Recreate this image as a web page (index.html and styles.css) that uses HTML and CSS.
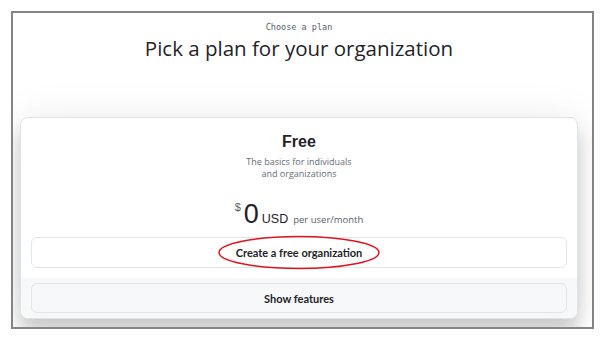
FILE: index.html
```html
<!DOCTYPE html>
<html lang="en">
<head>
    <meta charset="UTF-8">
    <meta name="viewport" content="width=device-width, initial-scale=1.0">
    <title>Pick a plan for your organization</title>
    <link rel="stylesheet" href="styles.css">
</head>
<body>
    <div class="frame">
        <div class="header">
            <p class="eyebrow">Choose a plan</p>
            <h1>Pick a plan for your organization</h1>
        </div>
        <div class="plan">
            <div class="plan-main">
                <h2>Free</h2>
                <p class="plan-desc">The basics for individuals<br>and organizations</p>
                <div class="price">
                    <span class="currency">$</span>
                    <span class="amount">0</span>
                    <span class="code">USD</span>
                    <span class="period">per user/month</span>
                </div>
                <div class="cta-wrap">
                    <button type="button" class="btn">Create a free organization</button>
                    <!-- red annotation ring drawn over the button -->
                    <svg class="ring" width="164" height="36" viewBox="0 0 164 36">
                        <ellipse cx="82" cy="17.5" rx="80" ry="16" fill="none" stroke="#e0141e" stroke-width="1.5"/>
                    </svg>
                </div>
            </div>
            <div class="plan-footer">
                <button type="button" class="btn btn-muted">Show features</button>
            </div>
        </div>
    </div>
</body>
</html>
```

FILE: styles.css
```css
body {
    margin: 0;
    background: #ffffff;
    font-family: 'Open Sans', 'Noto Sans', sans-serif;
    color: #1f2328;
}
.frame {
    box-sizing: border-box;
    width: 583px;
    height: 318px;
    margin: 11px 0 0 11px;
    border: 2px solid #858585;
    background: #ffffff;
    overflow: hidden;
    padding: 0 14px 0 7px;
}
.header {
    text-align: center;
    height: 104px;
}
.eyebrow {
    margin: 0;
    padding-top: 8px;
    font-family: 'DejaVu Sans Mono', monospace;
    font-size: 8.5px;
    line-height: 12px;
    color: #57606a;
}
h1 {
    margin: 1px 0 0;
    font-size: 20.5px;
    font-weight: 400;
    line-height: 28px;
    color: #1f2328;
}
.plan {
    background: #ffffff;
    border: 1px solid #dfe4ea;
    border-radius: 8px;
    overflow: hidden;
    box-shadow: 0 0 40px rgba(0, 0, 0, 0.08), 0 14px 18px rgba(0, 0, 0, 0.18);
}
.plan-main {
    text-align: center;
    padding: 14px 10px 10px 10px;
}
h2 {
    margin: 0;
    font-family: 'Liberation Sans', Arial, sans-serif;
    font-size: 16px;
    font-weight: 700;
    line-height: 20px;
    color: #1f2328;
}
.plan-desc {
    margin: 4px 0 0;
    font-size: 9px;
    line-height: 11.5px;
    color: #656d76;
}
.price {
    display: flex;
    justify-content: center;
    align-items: baseline;
    margin-top: 21px;
    height: 28px;
    font-family: 'Liberation Sans', Arial, sans-serif;
}
.currency {
    align-self: flex-start;
    font-size: 11px;
    color: #57606a;
    margin-right: 3px;
    margin-top: 1px;
}
.amount {
    font-size: 27px;
    line-height: 28px;
    color: #1f2328;
}
.code {
    font-size: 12.5px;
    color: #1f2328;
    margin-left: 3px;
}
.period {
    font-family: 'Open Sans', sans-serif;
    font-size: 9.5px;
    color: #57606a;
    margin-left: 5px;
}
.cta-wrap {
    position: relative;
    margin-top: 9px;
}
.btn {
    display: block;
    box-sizing: border-box;
    width: 100%;
    height: 31px;
    padding: 0;
    background: #ffffff;
    border: 1px solid #e1e4e8;
    border-radius: 6px;
    font-family: 'Lato', sans-serif;
    font-size: 11px;
    font-weight: 700;
    color: #1f2328;
}
.btn-muted {
    height: 30px;
    background: #f6f8fa;
}
.ring {
    position: absolute;
    left: 50%;
    top: -2px;
    margin-left: -82px;
}
.plan-footer {
    background: #f6f8fa;
    padding: 5px 10px 5px 10px;
}
```
